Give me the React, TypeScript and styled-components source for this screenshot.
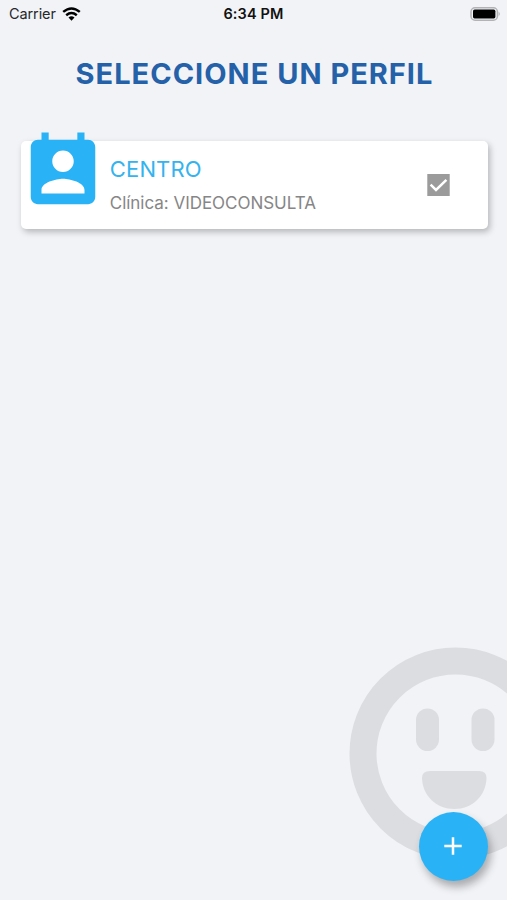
import React from 'react';
import styled, { createGlobalStyle } from 'styled-components';

const GlobalStyle = createGlobalStyle`
  * { box-sizing: border-box; }
  body { margin: 0; background: #f1f3f7; }
`;

const Screen = styled.main`
  position: relative;
  width: 507px;
  height: 900px;
  overflow: hidden;
  display: flex;
  flex-direction: column;
  background: #f1f3f7;
  font-family: Inter, 'Liberation Sans', sans-serif;
`;

const StatusBar = styled.header`
  display: grid;
  grid-template-columns: 1fr auto 1fr;
  align-items: center;
  height: 28px;
  padding: 0 6px 0 9px;
  color: #111;
  font-size: 14.5px;
  line-height: 28px;
`;

const Carrier = styled.div`
  display: flex;
  align-items: center;
  gap: 6px;
  letter-spacing: -0.1px;
  color: #27272a;
`;

const Clock = styled.time`
  margin-left: -3px;
  font-size: 14.5px;
  font-weight: 600;
  letter-spacing: 0.15px;
`;

const BatterySlot = styled.div`
  display: flex;
  justify-content: flex-end;
`;

const Title = styled.h1`
  margin: 26px 0 0;
  padding-left: 2px;
  height: 40px;
  line-height: 40px;
  text-align: center;
  white-space: nowrap;
  font-size: 29px;
  font-weight: 650;
  letter-spacing: 1px;
  color: #2461a8;
`;

const Card = styled.article`
  display: flex;
  align-items: flex-start;
  height: 88px;
  margin: 47px 19px 0 21px;
  padding-right: 38px;
  border-radius: 5px;
  background: #fff;
  box-shadow: 2px 3px 6px rgba(0, 0, 0, 0.25);
`;

const ProfileIcon = styled.svg`
  flex: none;
  width: 86px;
  height: 86px;
  margin: -12.5px 0 0 -0.8px;
  fill: #29b3f6;
`;

const CardText = styled.div`
  flex: 1;
  padding: 14px 0 0 3.6px;
  white-space: nowrap;
`;

const Name = styled.h2`
  margin: 0;
  font-size: 22px;
  line-height: 28px;
  font-weight: 400;
  letter-spacing: 0.15px;
  color: #34b3ee;
`;

const Clinic = styled.p`
  margin: 8px 0 0;
  font-size: 17px;
  line-height: 24px;
  letter-spacing: -0.03px;
  color: #868686;
`;

const Check = styled.svg`
  width: 23px;
  height: 22px;
  margin-top: 33px;
`;

const Face = styled.svg`
  position: absolute;
  left: 349px;
  top: 647px;
  width: 213px;
  height: 213px;
`;

const AddButton = styled.button`
  position: absolute;
  right: 19px;
  bottom: 19px;
  display: grid;
  place-items: center;
  width: 69px;
  height: 69px;
  padding: 0 1px 1px 0;
  border: 0;
  border-radius: 50%;
  background: #29b3f6;
  box-shadow: 3px 6px 9px rgba(0, 0, 0, 0.3);
`;

export default function App() {
  return (
    <>
      <GlobalStyle />
      <Screen>
        <StatusBar>
          <Carrier>
            Carrier
            <svg width="19" height="14" viewBox="0 0 19 14">
              <g fill="none" stroke="#000" strokeWidth="2.5">
                <path d="M1.2 4.9Q9.5-2 17.8 4.9" />
                <path d="M4.2 8.2Q9.5 3.9 14.8 8.2" />
              </g>
              <path d="M6.5 10.5Q9.5 8.1 12.5 10.5L9.5 13.7Z" />
            </svg>
          </Carrier>
          <Clock>6:34 PM</Clock>
          <BatterySlot>
            <svg width="31" height="14" viewBox="0 0 31 14">
              <rect x="1" y="0.8" width="26.4" height="12.4" rx="4" fill="none" stroke="#b3b3b6" strokeWidth="1.5" />
              <rect x="3" y="2.6" width="22.4" height="8.8" rx="1.6" />
              <path d="M28.6 4.6Q31 7 28.6 9.4Z" fill="#b3b3b6" />
            </svg>
          </BatterySlot>
        </StatusBar>
        <Title>SELECCIONE UN PERFIL</Title>
        <Card>
          <ProfileIcon viewBox="0 0 24 24">
            <path d="M19 3h-1V1h-2v2H8V1H6v2H5c-1.11 0-2 .9-2 2v14c0 1.1.89 2 2 2h14c1.1 0 2-.9 2-2V5c0-1.1-.9-2-2-2z" />
            <path fill="#fff" d="M12 6c1.66 0 3 1.34 3 3s-1.34 3-3 3-3-1.34-3-3 1.34-3 3-3zm6 12H6v-1c0-2 4-3.1 6-3.1s6 1.1 6 3.1v1z" />
          </ProfileIcon>
          <CardText>
            <Name>CENTRO</Name>
            <Clinic>Clínica: VIDEOCONSULTA</Clinic>
          </CardText>
          <Check viewBox="0 0 23 22">
            <rect x="0.3" width="22.4" height="22" fill="#9b9b9b" />
            <path d="M3.6 10.7L9 16L19.4 5.9" fill="none" stroke="#fff" strokeWidth="2.5" />
          </Check>
        </Card>
        <Face viewBox="0 0 213 213" fill="#dcdde1">
          <circle cx="106.5" cy="106.5" r="92.5" fill="none" stroke="#dcdde1" strokeWidth="27" />
          <rect x="67" y="61.5" width="23" height="42.5" rx="11.5" />
          <rect x="122.5" y="61.5" width="23" height="42.5" rx="11.5" />
          <path d="M81 124H130Q137.5 124 137.5 131C137 149 123 162 105.3 162S73.5 149 73 131Q73 124 81 124Z" />
        </Face>
        <AddButton aria-label="Añadir perfil">
          <svg width="18" height="18" viewBox="0 0 18 18" fill="none" stroke="#fff" strokeWidth="2.5">
            <path d="M9 0.3V17.7M0.3 9H17.7" />
          </svg>
        </AddButton>
      </Screen>
    </>
  );
}
